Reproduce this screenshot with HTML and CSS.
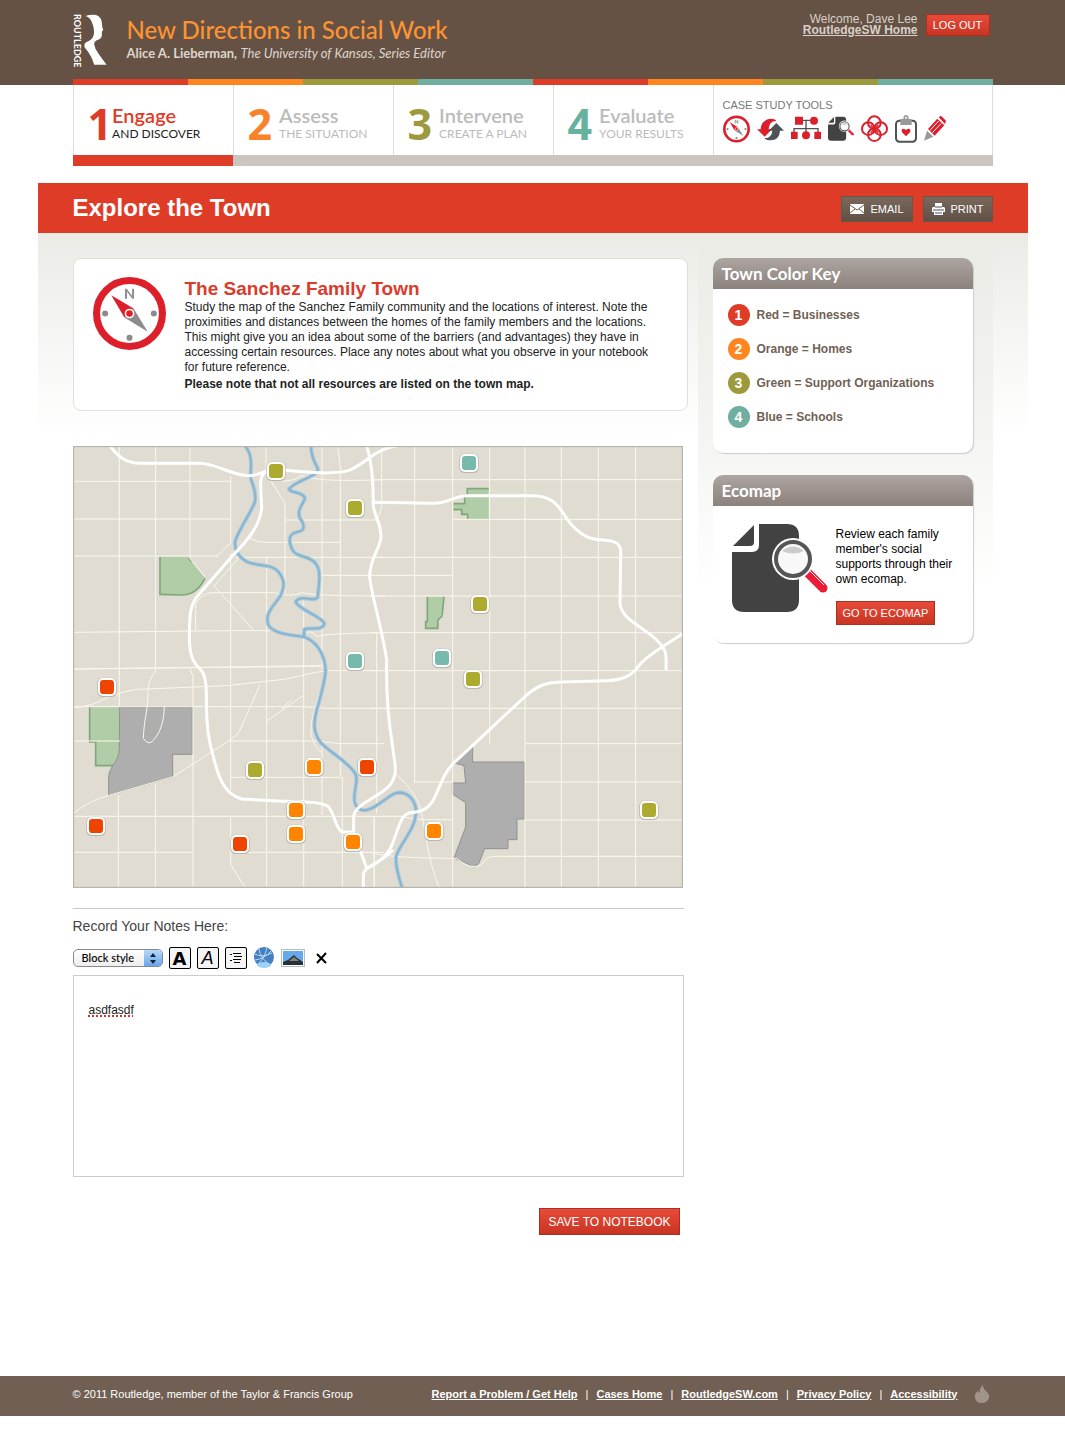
FILE: index.html
```html
<!DOCTYPE html>
<html lang="en">
<head>
<meta charset="utf-8">
<title>Explore the Town</title>
<link rel="stylesheet" href="styles.css">
</head>
<body>
<svg class="defs" aria-hidden="true">
  <symbol id="compass" viewBox="0 0 72 72">
    <circle cx="36" cy="36" r="32.500" fill="#fff" stroke="#dc1f2b" stroke-width="7"/>
    <path d="M32 21v-9h1l6 8v-8h1v9h-1l-6-8v8z" fill="#909090" stroke="#909090"/>
    <circle cx="12" cy="36" r="3" fill="#8c8c8c"/><circle cx="60" cy="36" r="3" fill="#8c8c8c"/><circle cx="36" cy="60" r="3" fill="#8c8c8c"/>
    <path d="M18 18l22 13-9 9z" fill="#dc1f2b"/><path d="M54 54L31 40l9-9z" fill="#8c8c8c"/>
    <circle cx="36" cy="36" r="4" fill="#dc1f2b" stroke="#fff" stroke-width="1.500"/>
  </symbol>
  <symbol id="document" viewBox="0 0 96 90">
    <path d="M27 0h28q12 0 12 12v64q0 12-12 12H12Q0 88 0 76V28h20q7 0 7-7z" fill="#424242"/>
    <path d="M22 1v17q0 4-4 4H1z" fill="#424242"/>
    <path d="M75 48l16 16" stroke="#fff" stroke-width="13"/>
    <path d="M75 48l15 15" stroke="#ec1c39" stroke-width="9"/><circle cx="91" cy="64" r="4.500" fill="#ec1c39"/>
    <path d="M78 47l14 14" stroke="#fff"/>
    <circle cx="61" cy="35" r="21" fill="#fff"/><circle cx="61" cy="35" r="17" fill="#f8f8f8" stroke="#555" stroke-width="4"/>
    <path d="M50 27q11-9 22 0-11 5-22 0z" fill="#ccc"/>
  </symbol>
</svg>

<header class="masthead">
  <div class="inner">
    <div class="brand">
      <div class="logo"><span>ROUTLEDGE</span>
        <svg width="23" height="51" viewBox="74 40 68 152" aria-hidden="true"><path fill="#fff" d="M78 46Q95 40 110 43Q126 50 127 66L128 78L131 88L127 92L127 104Q126 113 118 116Q104 120 104 130Q106 145 118 160L141 191L104 191Q97 165 76 140Q72 130 80 124Q98 118 102 105Q106 90 100 72Q94 50 78 46Z"/></svg>
      </div>
      <div class="brand-text">
        <div class="site-title">New Directions in Social Work</div>
        <div class="site-author"><strong>Alice A. Lieberman,</strong> <em>The University of Kansas, Series Editor</em></div>
      </div>
    </div>
    <div class="account">
      <p>Welcome, Dave Lee<br><a href="#">RoutledgeSW Home</a></p>
      <button class="btn logout" type="button">LOG OUT</button>
    </div>
  </div>
  <div class="stripes"><i></i><i></i><i></i><i></i><i></i><i></i><i></i><i></i></div>
</header>

<nav class="steps" aria-label="Steps">
  <a class="step red current" href="#"><b>1</b><span><strong>Engage</strong><small>AND DISCOVER</small></span></a>
  <a class="step orange" href="#"><b>2</b><span><strong>Assess</strong><small>THE SITUATION</small></span></a>
  <a class="step green" href="#"><b>3</b><span><strong>Intervene</strong><small>CREATE A PLAN</small></span></a>
  <a class="step teal" href="#"><b>4</b><span><strong>Evaluate</strong><small>YOUR RESULTS</small></span></a>
  <div class="tools">
    <p>CASE STUDY TOOLS</p>
    <div class="tool-row">
      <a href="#" aria-label="Town map"><svg width="27" height="28"><use href="#compass"/></svg></a>
      <a href="#" aria-label="Timeline"><svg width="27" height="28" viewBox="0 0 81 84"><path d="M0 43h11Q13 14 41 11q13 0 17 7Q37 17 35 43h10L23 65z" fill="#dc1f2b"/><path d="M81 47H69q-1 28-29 29-13 0-18-7 22 1 24-22H35l23-23z" fill="#4f5355"/></svg></a>
      <a href="#" aria-label="Family tree"><svg width="30" height="28" viewBox="0 0 90 84"><path d="M24 16h35M45 16v52M9 58V41h72v17M9 41h72" fill="none" stroke="#4f5355" stroke-width="4"/><g fill="#dc1f2b"><path d="M12 5h24v24H12zM0 50h20v22H0zM70 50h20v22H70z"/><circle cx="69" cy="17" r="12"/><circle cx="45" cy="61" r="12"/></g></svg></a>
      <a href="#" aria-label="Ecomap"><svg width="26" height="28"><use href="#document"/></svg></a>
      <a href="#" aria-label="Relationships"><svg width="27" height="28" viewBox="0 0 81 84"><g fill="none" stroke="#dc1f2b" stroke-width="6"><circle cx="40" cy="23" r="19"/><circle cx="40" cy="59" r="19"/><circle cx="22" cy="41" r="19"/><circle cx="59" cy="41" r="19"/><path d="M29 30l23 23M52 30L29 53" stroke-width="4"/></g></svg></a>
      <a href="#" aria-label="Assessment"><svg width="22" height="28" viewBox="0 0 66 84"><rect x="3" y="17" width="60" height="63" rx="10" fill="#fff" stroke="#4f5355" stroke-width="6"/><path d="M16 12h9q0-12 8-12t8 12h9v18H16z" fill="#999"/><circle cx="33" cy="8" r="3" fill="#fff"/><path d="M33 64L21 52q-4-10 5-11 5 0 7 5 2-5 7-5 9 1 5 11z" fill="#dc1f2b"/></svg></a>
      <a href="#" aria-label="Notebook"><svg width="22" height="28" viewBox="0 0 66 84"><path d="M12 42l28-31 21 20-29 31z" fill="#dc1f2b"/><path d="M44 7l7-5 15 15-3 10z" fill="#dc1f2b"/><path d="M18 46l26-28M25 53l27-28" stroke="#fff" stroke-width="3"/><path d="M9 47l19 18-28 12z" fill="#999"/></svg></a>
    </div>
  </div>
</nav>

<main class="page">
  <div class="titlebar">
    <h1>Explore the Town</h1>
    <div class="actions">
      <button class="btn brown" type="button"><svg width="14" height="10" viewBox="0 0 14 10" aria-hidden="true"><path fill="#fff" d="M0 0h14v10H0z"/><path d="M0 1l7 5 7-5M0 9l5-4M14 9L9 5" fill="none" stroke="#6d5c50"/></svg>EMAIL</button>
      <button class="btn brown" type="button"><svg width="13" height="12" viewBox="0 0 13 12" aria-hidden="true"><path fill="#fff" d="M3 0h7v4h2l1 1v4h-2v3H2V9H0V5l1-1h2z"/><path d="M3 4h7M1 7h11M3 10h7" stroke="#4b5158"/></svg>PRINT</button>
    </div>
  </div>

  <div class="columns">
    <div class="main-col">
      <section class="intro">
        <svg width="73" height="73" aria-hidden="true"><use href="#compass"/></svg>
        <div>
          <h2>The Sanchez Family Town</h2>
          <p>Study the map of the Sanchez Family community and the locations of interest. Note the proximities and distances between the homes of the family members and the locations. This might give you an idea about some of the barriers (and advantages) they have in accessing certain resources. Place any notes about what you observe in your notebook for future reference.</p>
          <p class="note">Please note that not all resources are listed on the town map.</p>
        </div>
      </section>

      <svg class="map" viewBox="0 0 1830 1326" role="img" aria-label="Map of the town">
        <defs>
          <g id="pin"><rect x="-29" y="-28" width="58" height="58" rx="16" fill="#b9b6b0"/><rect x="-27" y="-27" width="54" height="54" rx="15" fill="#fff"/><rect x="-21" y="-21" width="42" height="42" rx="10"/></g>
          <g id="river">
            <path transform="translate(-24 -18)" d="M540 18C560 40 560 70 556 110C560 130 575 150 570 185C560 215 520 270 510 305C508 330 520 350 545 365C575 380 620 370 640 395C660 420 660 440 645 470C620 505 600 520 610 555C625 580 670 585 715 590C750 600 780 640 782 692M738 18C738 50 750 70 758 85C765 110 690 120 672 148C680 160 715 155 720 175C710 200 695 210 705 235C720 255 720 272 700 275C670 280 670 300 680 325C690 355 740 345 755 375C770 400 760 440 758 472C745 490 710 460 692 485C695 505 770 530 778 550C775 575 730 560 718 568L717 590"/>
            <path transform="translate(-24 642)" d="M782 30C780 60 770 100 755 150C745 190 745 215 765 245C790 275 850 305 870 340C885 360 860 400 870 430Q880 455 905 450C935 445 965 410 990 400C1025 390 1055 420 1053 460C1050 510 1005 550 993 590C991 620 1000 650 1012 685"/>
          </g>
        </defs>
        <rect width="1830" height="1326" fill="#e0dcd1"/>
        <g class="park">
          <path d="M261 332h83l52 65q-25 50-70 50l-65-2z"/>
          <path d="M1183 128h64v91h-63v-14h-18v-14h-25v-18h34v-20h8z"/>
          <path d="M1063 452h50l-3 45-15 25-1 25h-36v-20h5z"/>
          <path d="M50 783h90v150l-12 26H68v-71H50z"/>
        </g>
        <path class="park-edge" d="M345 334l12 14M396 397q-25 50-70 50l-65-2V332M1247 128h-64v17M1141 173h34v-28M1141 191h25v14h18v14M1063 452v75h-5v20h36l1-25 12-12 6-58M50 783v105h18v71h60"/>
        <g class="zone">
          <path d="M140 783h218v142h-59v68L107 1048v-55q0-15 10-30 22-28 22-55z"/>
          <path d="M1141 950l58-47v45h155v171h-22v62h-27v27h-70l-18 45-14 10-60-27 35-93v-73l-40-26v-33h40l-5-52z"/>
        </g>
        <g class="streets">
          <g transform="translate(-24 -18)">
            <path d="M163 18v782M272 18v652M375 18v332M497 110v200l-42 38M497 340v710M603 18v80M605 350v990M603 100l57 90v270M716 480v860M771 18v670M818 18l8 60v930M950 18v180q-5 35-22 40M25 124h470M25 237h470M25 348h435M510 352h450M660 240h280M553 293q20 14 50 14h225M771 406h390M392 490v80M392 490q20-30 45-32h190q45 15 85 0 30 10 250 10M25 577l470-5h120M715 590q20-30 40 0 20-10 205-12M25 687l740-8M370 350l50 60M445 435l120 135M450 435l70-80M640 122q40 5 70-15 40 20 250 12"/>
          </g>
          <g transform="translate(891 -18)">
            <path d="M134 18v1010M248 18v1330M359 18v895M465 18v1330M574 18v1330M685 18v1330M797 18v1330M0 119h936M248 238h690M0 352h936M0 468h936M0 578h936M20 578v542M12 1130v220"/>
          </g>
          <g transform="translate(-24 642)">
            <path d="M25 27l745-10M25 142q30 0 60-10 100-50 160-45l240-10 180-20q80-20 120-25h170M25 140h680q40 0 80 5h180M25 243h140M497 243h250l80 8h130M497 352h335v330M25 469h900M25 577h357M497 577h460M160 405v277M271 370v312M375 25l9 25v630M497 469v145l43 68M771 240v225M928 469v213M271 0v35q-20 20-22 60c0 60-12 80-14 140q17 27 35 0c20-25 27-60 28-95M25 460q50-40 110-55l190-55 170-110q20-10 30-30l60-135M605 183l112-78M650 145l30-25M763 100c-30 100-40 130 8 180"/>
          </g>
          <g transform="translate(891 642)">
            <path d="M0 32h936M0 145h936M465 251h470M134 366h115M465 366h470M0 469h100q20 12 145 10M465 480h470M0 577q60 18 260 18 60 50 90 0 10-6 30-6h556M75 340q70 60 80 120c15 80 20 140 52 222"/>
          </g>
        </g>
        <use href="#river" class="river"/>
        <use href="#river" class="river-core"/>
        <g class="highways">
          <path transform="translate(-24 -18)" d="M135 18C160 50 180 68 225 70L400 70C450 68 500 108 555 107C580 107 590 95 610 93L655 90C720 96 800 105 850 92C880 80 900 62 915 52C940 35 965 20 995 19M610 93C575 100 590 150 590 205C585 250 560 290 500 350L400 465C375 495 373 520 373 600C375 640 380 665 408 690C422 705 424 730 424 760C424 860 430 900 445 950C460 1010 475 1060 530 1077L640 1083C720 1085 770 1085 790 1100C810 1125 810 1160 830 1175L862 1177M905 20C920 60 925 120 925 200C930 230 948 250 948 290C945 330 915 350 914 410C920 470 950 560 965 660C963 760 973 860 983 920C990 980 1000 1000 975 1035C940 1075 870 1090 866 1130V1177L905 1285L895 1300V1345M905 1285Q942 1268 985 1230"/>
          <path transform="translate(891 642)" d="M-10 625C40 600 60 580 75 530C90 490 95 465 120 458C160 455 175 445 190 420C215 370 220 340 250 310C300 265 400 170 470 105C510 70 540 65 600 65L710 62C770 60 790 40 810 13C840 -20 880 -40 940 -80"/>
          <path transform="translate(891 -18)" d="M5 187L190 190C240 190 250 168 290 167L480 167C570 165 570 220 610 260C640 290 660 298 700 300C745 302 755 315 752 350L750 490C755 540 820 560 860 600C890 630 890 640 888 690"/>
        </g>
        <g fill="#acaa2f"><use href="#pin" x="609" y="75"/><use href="#pin" x="846" y="186"/><use href="#pin" x="1221" y="474"/><use href="#pin" x="1200" y="699"/><use href="#pin" x="546" y="972"/><use href="#pin" x="1728" y="1092"/></g>
        <g fill="#77baac"><use href="#pin" x="1188" y="51"/><use href="#pin" x="1107" y="636"/><use href="#pin" x="846" y="645"/></g>
        <g fill="#ee4400"><use href="#pin" x="102" y="723"/><use href="#pin" x="882" y="963"/><use href="#pin" x="69" y="1140"/><use href="#pin" x="501" y="1194"/></g>
        <g fill="#ff8500"><use href="#pin" x="723" y="963"/><use href="#pin" x="669" y="1092"/><use href="#pin" x="669" y="1164"/><use href="#pin" x="840" y="1188"/><use href="#pin" x="1083" y="1155"/></g>
        <rect x="1" y="1" width="1828" height="1324" fill="none" stroke="#b5b5ae" stroke-width="5"/>
      </svg>

      <form class="notes">
        <label for="notes">Record Your Notes Here:</label>
        <div class="toolbar">
          <span class="select"><select aria-label="Block style"><option>Block style</option></select><svg width="18" height="18" viewBox="0 0 18 18" aria-hidden="true"><path d="M9 3l3 4H6zM9 14l3-4H6z" fill="#123"/></svg></span>
          <button class="tool boxed heavy" type="button">A</button>
          <button class="tool boxed slanted" type="button">A</button>
          <button class="tool boxed" type="button" aria-label="List"><svg width="14" height="12" viewBox="0 0 14 12" shape-rendering="crispEdges"><path d="M4 1h8M5 4h8M4 7h8M5 10h6M1 2h2M1 8h2" transform="translate(0 .5)" stroke="#000"/></svg></button>
          <button class="tool" type="button" aria-label="Link"><svg width="22" height="22" viewBox="0 0 22 22"><circle cx="11" cy="10" r="10" fill="#447fc0"/><ellipse cx="11" cy="18" rx="7" ry="3" fill="#9bd3f7"/><path d="M2 7q7 4 17-1M2 13q9-1 16-9M6 2q1 9 10 15M14 1q-3 11-9 16" fill="none" stroke="#b9d8f5"/></svg></button>
          <button class="tool" type="button" aria-label="Image"><svg width="24" height="18" viewBox="0 0 24 18"><path d="M0 0h24v18H0z" fill="#b5bcc6"/><path d="M1 1h22v16H1z" fill="#fff"/><path d="M2 2h20v14H2z" fill="#65a9ed"/><path d="M2 13l5-2 6-5 3 3 6 4v3H2z" fill="#263238"/><path d="M8 12l5-4 5 4z" fill="#8a8173"/></svg></button>
          <button class="tool" type="button" aria-label="Clear"><svg width="12" height="12" viewBox="0 0 12 12"><path d="M1 2l9 9M10 1l-9 10" stroke="#000" stroke-width="2"/></svg></button>
        </div>
        <textarea id="notes" spellcheck="false">asdfasdf</textarea>
        <button class="btn save" type="button">SAVE TO NOTEBOOK</button>
      </form>
    </div>

    <aside class="sidebar">
      <section class="panel">
        <h3>Town Color Key</h3>
        <ul class="key">
          <li><b class="bg-red">1</b>Red = Businesses</li>
          <li><b class="bg-orange">2</b>Orange = Homes</li>
          <li><b class="bg-green">3</b>Green = Support Organizations</li>
          <li><b class="bg-teal">4</b>Blue = Schools</li>
        </ul>
      </section>
      <section class="panel">
        <h3>Ecomap</h3>
        <div class="ecomap">
          <svg width="96" height="90" aria-hidden="true"><use href="#document"/></svg>
          <div>
            <p>Review each family member's social supports through their own ecomap.</p>
            <button class="btn go" type="button">GO TO ECOMAP</button>
          </div>
        </div>
      </section>
    </aside>
  </div>
</main>

<footer class="footer">
  <div class="footer-inner">
    <span>© 2011 Routledge, member of the Taylor &amp; Francis Group</span>
    <div class="links"><a href="#">Report a Problem / Get Help</a><i>|</i><a href="#">Cases Home</a><i>|</i><a href="#">RoutledgeSW.com</a><i>|</i><a href="#">Privacy Policy</a><i>|</i><a href="#">Accessibility</a>
      <svg width="16" height="18" viewBox="0 0 16 18" aria-hidden="true"><path d="M9 0q0 4 4 7 3 3 2 6-2 5-7 5-6 0-7-5-1-4 3-7 1 2 2 2Q5 3 9 0z" fill="#a0948b"/></svg>
    </div>
  </div>
</footer>
</body>
</html>
```
FILE: styles.css
```css
* { box-sizing: border-box; }
body { margin: 0; background: #fff; color: #222; font: 12px/15px "Liberation Sans", Arial, sans-serif; }
h1, h2, h3, p, ul { margin: 0; padding: 0; }
button, select, textarea { font-family: inherit; }
svg { display: block; flex: none; }
.defs { position: absolute; width: 0; height: 0; }

.btn { display: flex; align-items: center; justify-content: center; padding: 0 6px; border: 1px solid #a83020; background: linear-gradient(#e84a38, #c93523); color: #fff; font-size: 12px; white-space: nowrap; }

.masthead { height: 85px; background: #665244; display: flex; flex-direction: column; justify-content: space-between; }
.inner, .stripes, .steps, .footer-inner { width: 100%; max-width: 920px; margin: 0 auto; }
.inner { display: flex; justify-content: space-between; padding: 14px 3px 0 0; }
.brand { display: flex; gap: 20px; }
.logo { display: flex; align-items: flex-start; color: #fff; font: bold 9px/9px Lato, sans-serif; }
.logo span { writing-mode: vertical-rl; }
.logo svg { margin-left: 2px; }
.site-title { color: #fd9332; font: 500 24px/31px Lato, sans-serif; }
.site-author { color: #ddd6cf; font: 13px/16px Lato, sans-serif; }
.account { display: flex; gap: 8px; align-items: flex-start; text-align: right; color: #d8d0c8; line-height: 11px; }
.account a { color: inherit; font-weight: bold; }
.logout { height: 22px; width: 64px; font-size: 11px; }
.stripes { display: grid; grid-template-columns: repeat(8, 1fr); height: 6px; }
.stripes i:nth-child(4n+1) { background: #df3c28; }
.stripes i:nth-child(4n+2) { background: #ff851e; }
.stripes i:nth-child(4n+3) { background: #9c9a3d; }
.stripes i:nth-child(4n) { background: #70ae9f; }

.steps { display: grid; grid-template-columns: repeat(4, 160px) 1fr; height: 81px; }
.step { display: flex; gap: 7px; padding: 18px 0 0 15px; box-shadow: inset 0 -11px #cac5c1, inset 1px 0 #ddd; color: #bbb; text-decoration: none; font-family: Lato, sans-serif; }
.step b { font: bold 43px/41px "Open Sans", sans-serif; }
.step span { display: flex; flex-direction: column; padding-top: 1px; }
.step strong { font-size: 20px; line-height: 22px; font-weight: 600; }
.step small { font-size: 12px; line-height: 15px; }
.red b, .red strong { color: #df3c28; }
.orange b { color: #f9832b; }
.green b { color: #9c9a3d; }
.teal b { color: #67b19f; }
.step.current { gap: 0; box-shadow: inset 0 -11px #df3c28, inset 1px 0 #ddd; }
.current small { color: #222; }
.tools { padding: 13px 0 0 10px; box-shadow: inset 0 -11px #cac5c1, inset 1px 0 #ddd, inset -1px 0 #ddd; color: #777; font-size: 11px; }
.tool-row { display: flex; gap: 7px; margin-top: 2px; }

.page { max-width: 990px; margin: 17px auto 0; background: linear-gradient(#ebebe6, #fff 200px) 0 50px no-repeat; }
.titlebar { display: flex; justify-content: space-between; align-items: center; height: 50px; padding: 0 35px; background: #df3c28; color: #fff; }
h1 { font-size: 24px; line-height: 28px; }
.actions { display: flex; gap: 10px; padding-top: 2px; }
.brown { height: 26px; gap: 6px; padding: 0 8px; border-color: #65564b; background: linear-gradient(#7a685b, #5f5046); font-size: 11px; }
.columns { display: flex; justify-content: space-between; align-items: flex-start; padding: 0 35px; }
.main-col { flex: 0 1 615px; padding-top: 25px; }
.intro { display: flex; gap: 19px; height: 153px; padding: 18px 30px 0 19px; border: 1px solid #e0e0dd; border-radius: 8px; background: #fff; }
h2 { color: #dc3b2b; font-size: 19px; line-height: 23px; }
.note { margin-top: 2px; font-weight: bold; }

.map { width: 610px; max-width: 100%; height: auto; margin-top: 35px; }
.park { fill: #b1cda8; }
.park-edge { fill: none; stroke: #7fa77c; stroke-width: 5; }
.zone { fill: #aeaeae; stroke: #919191; stroke-width: 3; }
.streets { fill: none; stroke: #faf8ee; stroke-width: 3; }
.river { fill: none; stroke: #aecbda; stroke-width: 12; }
.river-core { fill: none; stroke: #86b5d3; stroke-width: 6; }
.highways { fill: none; stroke: #fff; stroke-width: 9; stroke-linejoin: round; }

.notes { width: 611px; max-width: 100%; margin-top: 20px; padding-top: 8px; border-top: 1px solid #ccc; }
.notes label { display: block; color: #444; font-size: 14px; line-height: 18px; }
.toolbar { display: flex; align-items: center; gap: 6px; height: 24px; margin: 11px 0 5px; }
.select { position: relative; width: 90px; height: 18px; border: 1px solid #888; border-radius: 5px; overflow: hidden; background: linear-gradient(#fff, #eee); }
.select select { width: 100%; height: 16px; padding: 0 0 0 8px; border: 0; appearance: none; background: none; color: #000; font: 500 11px/16px Lato, sans-serif; }
.select svg { position: absolute; right: 0; top: 0; background: linear-gradient(#b6d8fb, #5d9fe8); pointer-events: none; }
.tool { display: flex; align-items: center; justify-content: center; height: 22px; min-width: 22px; padding: 0; border: 0; background: none; color: #000; }
.boxed { width: 22px; border: 1px solid #000; border-radius: 2px; background: #f4f4f4; font-size: 18px; }
.heavy { font-family: "DejaVu Sans", sans-serif; font-weight: bold; }
.slanted { font-style: italic; }
textarea { display: block; width: 100%; height: 202px; padding: 26px 15px; border: 1px solid #ccc; background: #fff; color: #222; font-size: 12px; line-height: 16px; resize: none; text-decoration: underline dotted #c33 2px; }
.save { height: 27px; margin: 31px 4px 0 auto; padding: 0 8px; }

.sidebar { flex: 0 0 295px; display: flex; flex-direction: column; gap: 22px; padding: 25px 20px 20px 15px; background: linear-gradient(#ebebe6, #f4f4f0 200px, #fff 360px); }
.panel { border-radius: 10px; background: #fff; box-shadow: 1px 1px 1px #ccc; overflow: hidden; }
h3 { height: 31px; padding-left: 9px; background: linear-gradient(#ada5a1, #8b817d); color: #fff; font: bold 17px/32px Lato, sans-serif; }
.key { display: grid; gap: 12px; padding: 15px 15px 25px; list-style: none; color: #705f54; font-weight: bold; }
.key li { display: flex; align-items: center; gap: 7px; }
.key b { width: 22px; height: 22px; border-radius: 50%; color: #fff; font-size: 14px; line-height: 22px; text-align: center; }
.bg-red { background: #df3c28; }
.bg-orange { background: #ff851e; }
.bg-green { background: #9c9a3d; }
.bg-teal { background: #70ae9f; }
.ecomap { display: flex; gap: 8px; padding: 18px 15px 18px 19px; color: #000; }
.ecomap p { padding-top: 3px; }
.go { height: 24px; margin-top: 14px; font-size: 11px; }

.footer { margin-top: 141px; margin-bottom: 20px; background: #705f52; color: #fff; font-size: 11px; }
.footer-inner { display: flex; align-items: center; justify-content: space-between; height: 40px; padding: 0 3px 4px 0; }
.links { display: flex; align-items: center; gap: 8px; }
.links a { color: #fff; font-weight: bold; }
.links i { font-style: normal; }
.links svg { margin-left: 8px; }
```
